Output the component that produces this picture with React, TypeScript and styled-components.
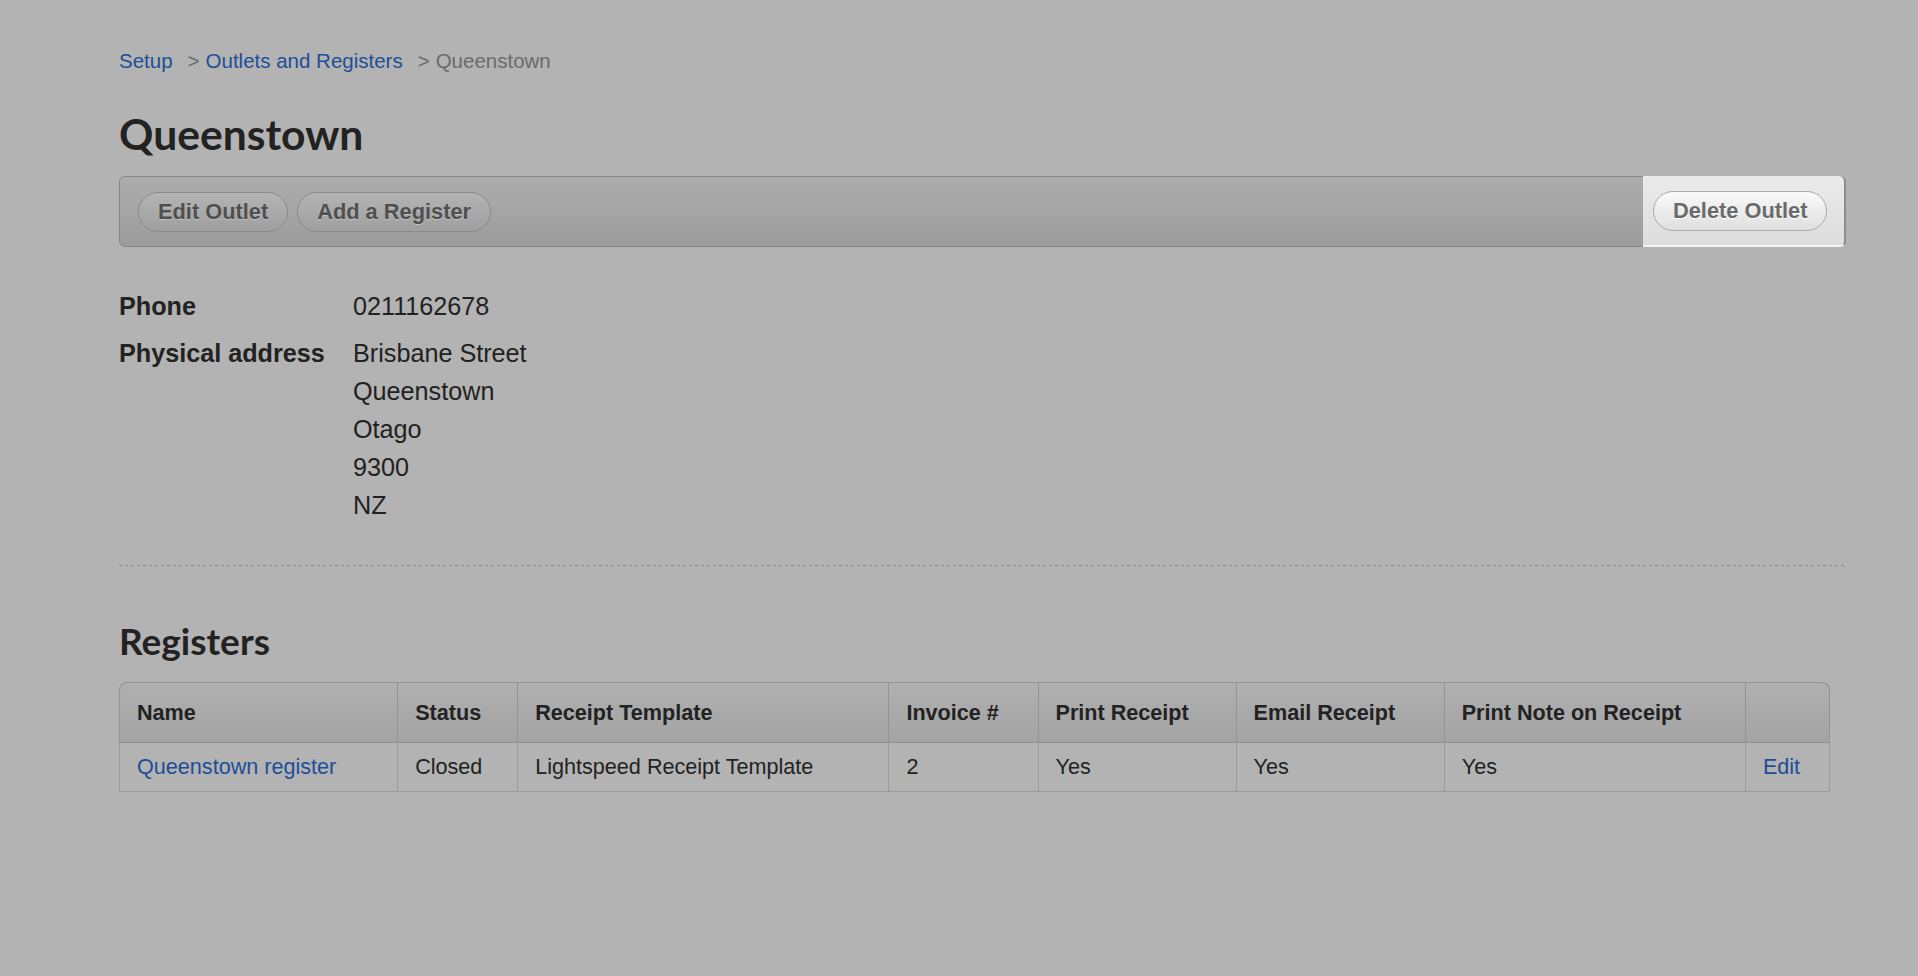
import React, { FC } from 'react'
import styled, { createGlobalStyle } from 'styled-components'

const GlobalStyle = createGlobalStyle`
	html, body {
		margin: 0;
		padding: 0;
		background: #b3b3b3;
	}
	body {
		font-family: "Liberation Sans", Arial, sans-serif;
		color: #222;
	}
`

interface IRegister {
	name: string
	status: string
	template: string
	invoice: string
	printReceipt: string
	emailReceipt: string
	printNote: string
}

const registers: IRegister[] = [
	{
		name: 'Queenstown register',
		status: 'Closed',
		template: 'Lightspeed Receipt Template',
		invoice: '2',
		printReceipt: 'Yes',
		emailReceipt: 'Yes',
		printNote: 'Yes',
	},
]

const columns = [
	{ label: 'Name', width: 278 },
	{ label: 'Status', width: 120 },
	{ label: 'Receipt Template', width: 371 },
	{ label: 'Invoice #', width: 149 },
	{ label: 'Print Receipt', width: 198 },
	{ label: 'Email Receipt', width: 208 },
	{ label: 'Print Note on Receipt', width: 301 },
	{ label: '', width: 85 },
]

const App: FC = () => {
	return (
		<Page>
			<GlobalStyle />
			<Breadcrumb>
				<CrumbLink href="#">Setup</CrumbLink>
				<Sep>&gt;</Sep>
				<CrumbLink href="#">Outlets and Registers</CrumbLink>
				<Sep>&gt;</Sep>
				<Current>Queenstown</Current>
			</Breadcrumb>

			<Title>Queenstown</Title>

			<Toolbar>
				<ButtonGroup>
					<PillButton>Edit Outlet</PillButton>
					<PillButton>Add a Register</PillButton>
				</ButtonGroup>
				<Highlight>
					<PillButton $light>Delete Outlet</PillButton>
				</Highlight>
			</Toolbar>

			<Details>
				<Label>Phone</Label>
				<Value>0211162678</Value>
				<Label>Physical address</Label>
				<Value>
					<div>Brisbane Street</div>
					<div>Queenstown</div>
					<div>Otago</div>
					<div>9300</div>
					<div>NZ</div>
				</Value>
			</Details>

			<Divider />

			<SubTitle>Registers</SubTitle>

			<Table>
				<colgroup>
					{columns.map((c, i) => (
						<Col key={i} $w={c.width} />
					))}
				</colgroup>
				<thead>
					<tr>
						{columns.map((c, i) => (
							<Th key={i}>{c.label}</Th>
						))}
					</tr>
				</thead>
				<tbody>
					{registers.map((r) => (
						<tr key={r.name}>
							<Td>
								<TableLink href="#">{r.name}</TableLink>
							</Td>
							<Td>{r.status}</Td>
							<Td>{r.template}</Td>
							<Td>{r.invoice}</Td>
							<Td>{r.printReceipt}</Td>
							<Td>{r.emailReceipt}</Td>
							<Td>{r.printNote}</Td>
							<Td>
								<TableLink href="#">Edit</TableLink>
							</Td>
						</tr>
					))}
				</tbody>
			</Table>
		</Page>
	)
}

const Page = styled.div`
	padding: 47px 72px 60px 119px;
	min-height: 976px;
	box-sizing: border-box;
`

const Breadcrumb = styled.div`
	font-size: 20.5px;
	line-height: 28px;
	display: flex;
	align-items: baseline;
`

const CrumbLink = styled.a`
	color: #1d4e96;
	text-decoration: none;
`

const Sep = styled.span`
	color: #6b6b6b;
	margin: 0 6px 0 15px;
`

const Current = styled.span`
	color: #6b6b6b;
`

const Title = styled.h1`
	font-family: Lato, "Liberation Sans", sans-serif;
	font-weight: 700;
	font-size: 42.6px;
	line-height: 48px;
	margin: 35px 0 18px;
	color: #222;
`

const Toolbar = styled.div`
	display: flex;
	justify-content: space-between;
	align-items: stretch;
	height: 71px;
	box-sizing: border-box;
	border: 1px solid #888;
	border-radius: 6px;
	background: linear-gradient(#adadad, #9c9c9c);
`

const ButtonGroup = styled.div`
	display: flex;
	align-items: center;
	gap: 9px;
	padding-left: 18px;
`

const Highlight = styled.div`
	display: flex;
	align-items: center;
	width: 203px;
	padding-left: 10px;
	box-sizing: border-box;
	margin: -1px -1px -1px 0;
	background: linear-gradient(#ebebeb, #dddddd);
	border-right: 2px solid #8c8c8c;
	border-bottom: 2px solid #f4f4f4;
	border-radius: 0 6px 6px 0;
`

const PillButton = styled.button<{ $light?: boolean }>`
	font-family: "Liberation Sans", Arial, sans-serif;
	font-weight: 700;
	font-size: 21.8px;
	height: 40px;
	padding: 0 19px;
	border-radius: 20px;
	border: 1px solid ${(p) => (p.$light ? '#a9a9a9' : '#8a8a8a')};
	background: ${(p) =>
		p.$light
			? 'linear-gradient(#fafafa, #dfdfdf)'
			: 'linear-gradient(#b4b4b4, #9f9f9f)'};
	color: ${(p) => (p.$light ? '#6a6a6a' : '#4f4f4f')};
	text-shadow: 0 1px 0 ${(p) => (p.$light ? '#ffffff' : '#c0c0c0')};
	cursor: pointer;
`

const Details = styled.div`
	display: grid;
	grid-template-columns: 234px 1fr;
	row-gap: 9px;
	margin-top: 40px;
	font-size: 25.2px;
	line-height: 38px;
`

const Label = styled.div`
	font-weight: 700;
	color: #222;
`

const Value = styled.div`
	color: #222;
`

const Divider = styled.div`
	height: 1px;
	margin-top: 41px;
	background: repeating-linear-gradient(
		to right,
		#8c8c8c 0,
		#8c8c8c 3px,
		transparent 3px,
		transparent 6px
	);
`

const SubTitle = styled.h2`
	font-family: Lato, "Liberation Sans", sans-serif;
	font-weight: 700;
	font-size: 37px;
	line-height: 44px;
	margin: 53px 0 19px;
	color: #222;
`

const Table = styled.table`
	width: 1711px;
	table-layout: fixed;
	border-collapse: separate;
	border-spacing: 0;
	font-size: 21.6px;
	thead tr th:first-child {
		border-top-left-radius: 8px;
	}
	thead tr th:last-child {
		border-top-right-radius: 8px;
		border-right: 1px solid #939393;
	}
	tbody tr td:last-child {
		border-right: 1px solid #9c9c9c;
	}
`

const Col = styled.col<{ $w: number }>`
	width: ${(p) => p.$w}px;
`

const Th = styled.th`
	height: 61px;
	box-sizing: border-box;
	text-align: left;
	font-weight: 700;
	padding: 0 16px 0 17px;
	color: #222;
	background: linear-gradient(#b0b0b0, #a3a3a3);
	border-top: 1px solid #939393;
	border-left: 1px solid #939393;
	border-bottom: 1px solid #8f8f8f;
	white-space: nowrap;
`

const Td = styled.td`
	height: 49px;
	box-sizing: border-box;
	padding: 0 16px 0 17px;
	color: #222;
	border-left: 1px solid #9c9c9c;
	border-bottom: 1px solid #9c9c9c;
	white-space: nowrap;
`

const TableLink = styled.a`
	color: #1d4e96;
	text-decoration: none;
`

export default App
